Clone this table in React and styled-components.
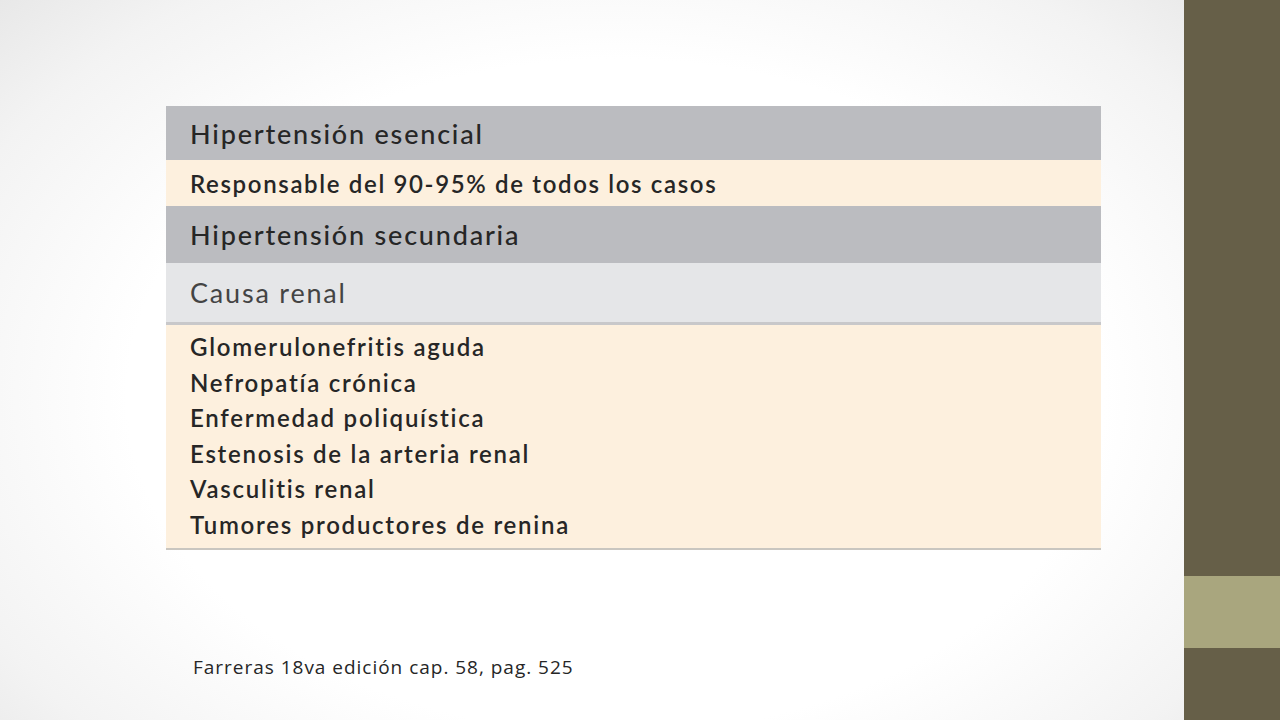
import styled, { createGlobalStyle } from "styled-components";

const GlobalStyle = createGlobalStyle`
    html, body {
        margin: 0;
        padding: 0;
        width: 1280px;
        height: 720px;
        overflow: hidden;
    }
`;

const Page = styled.div`
    display: flex;
    flex-direction: row;
    width: 1280px;
    height: 720px;
`;

const Slide = styled.div`
    flex: 1;
    display: flex;
    flex-direction: column;
    padding: 106px 0 0 166px;
    box-sizing: border-box;
    background: radial-gradient(ellipse 75% 85% at 52% 55%, #ffffff 55%, #f3f3f3 80%, #e4e4e4 100%);
`;

const SideBar = styled.div`
    width: 96px;
    display: flex;
    flex-direction: column;
`;

const Band = styled.div`
    flex: ${p => p.grow ? 1 : "none"};
    height: ${p => p.h ? p.h + "px" : "auto"};
    background: ${p => p.light ? "#a9a67e" : "#665f48"};
`;

const Table = styled.div`
    width: 935px;
    display: flex;
    flex-direction: column;
    font-family: Lato, "Open Sans", sans-serif;
    color: #262626;
`;

const Row = styled.div`
    display: flex;
    align-items: center;
    box-sizing: border-box;
    height: ${p => p.h}px;
    padding-left: 24px;
    background: ${p => p.bg};
    font-size: ${p => p.size}px;
    font-weight: ${p => p.weight};
    letter-spacing: ${p => p.spacing}px;
    color: ${p => p.color || "#262626"};
    border-bottom: ${p => p.line ? p.line : "none"};
`;

const List = styled.div`
    display: flex;
    flex-direction: column;
    box-sizing: border-box;
    height: 225px;
    padding: 4px 0 0 24px;
    background: #fdf0de;
    border-bottom: 2px solid #c9c6c0;
`;

const Item = styled.div`
    font-size: 24px;
    font-weight: 600;
    letter-spacing: 1.75px;
    line-height: 35.6px;
`;

const Source = styled.div`
    margin: 104px 0 0 27px;
    font-family: "Open Sans", Lato, sans-serif;
    font-size: 19px;
    letter-spacing: 0.98px;
    color: #262626;
`;

const causes = [
    "Glomerulonefritis aguda",
    "Nefropatía crónica",
    "Enfermedad poliquística",
    "Estenosis de la arteria renal",
    "Vasculitis renal",
    "Tumores productores de renina",
];

const App = () => {
    return (
        <Page>
            <GlobalStyle />
            <Slide>
                <Table>
                    <Row h={54} bg="#bbbcc0" size={27} weight={500} spacing={1.8}>Hipertensión esencial</Row>
                    <Row h={46} bg="#fdf0de" size={24} weight={600} spacing={1.65}>Responsable del 90-95% de todos los casos</Row>
                    <Row h={57} bg="#bbbcc0" size={27} weight={500} spacing={1.8}>Hipertensión secundaria</Row>
                    <Row h={62} bg="#e5e6e8" size={27} weight={400} spacing={1.8} color="#444" line="3px solid #c8c8ca">Causa renal</Row>
                    <List>
                        {causes.map((c, i) => <Item key={i}>{c}</Item>)}
                    </List>
                </Table>
                <Source>Farreras 18va edición cap. 58, pag. 525</Source>
            </Slide>
            <SideBar>
                <Band grow />
                <Band light h={72} />
                <Band h={72} />
            </SideBar>
        </Page>
    );
};

export default App;
